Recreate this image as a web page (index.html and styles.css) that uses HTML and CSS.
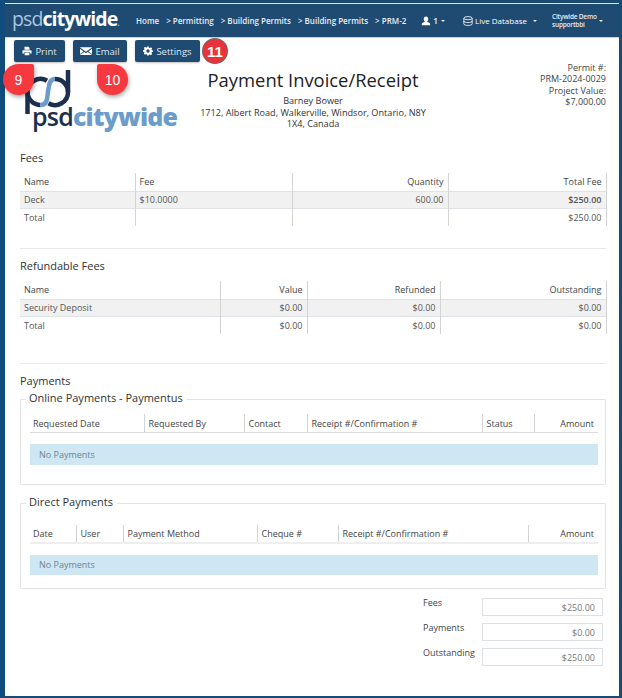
FILE: index.html
```html
<!DOCTYPE html>
<html lang="en">
<head>
<meta charset="utf-8">
<title>Payment Invoice/Receipt</title>
<link rel="stylesheet" href="styles.css">
</head>
<body>
<div class="frame">
  <nav class="nav">
    <div class="brand"><span class="brand-psd">psd</span><span class="brand-city">citywide</span><span class="brand-dot">.</span></div>
    <div class="crumbs"><span>Home</span><span>&gt; Permitting</span><span>&gt; Building Permits</span><span>&gt; Building Permits</span><span>&gt; PRM-2</span></div>
    <div class="nav-item nav-users">
      <svg class="nav-ico" viewBox="0 0 12 12"><path fill="#fff" d="M6 0.5c1.800 0 2.700 1.300 2.700 3 0 1.200-.5 2.300-1.200 2.900v.9c1.600.5 3.500 1.100 3.500 2.200V11H1V9.500c0-1.100 1.900-1.700 3.500-2.200v-.9c-.7-.6-1.200-1.700-1.200-2.900 0-1.700.9-3 2.700-3z"/></svg>
      <span>1</span><i class="caret"></i>
    </div>
    <div class="nav-item nav-db">
      <svg class="nav-ico" viewBox="0 0 12 12"><g fill="none" stroke="#fff" stroke-width="1"><ellipse cx="6" cy="2.600" rx="5" ry="1.900"/><path d="M1 2.600v6.800c0 1.100 2.200 1.900 5 1.900s5-.8 5-1.900V2.600M1 6c0 1.100 2.200 1.900 5 1.900S11 7.100 11 6"/></g></svg>
      <span>Live Database</span><i class="caret"></i>
    </div>
    <div class="nav-item nav-user">
      <div class="user-text"><span>Citywide Demo</span><span>supportbbi</span></div><i class="caret"></i>
    </div>
  </nav>

  <main class="page">
    <div class="toolbar">
      <button class="btn btn-print" type="button">
        <svg class="btn-ico" viewBox="0 0 12 12"><path fill="#fff" d="M3 .8h4.800L9 2v2.400H3zM1.500 5h9c.6 0 1 .4 1 1v3H9.500V7.500h-7V9H.5V6c0-.6.4-1 1-1zM3.200 8.200h5.600v3H3.200z"/></svg>Print
      </button>
      <button class="btn btn-email" type="button">
        <svg class="btn-ico btn-ico-wide" viewBox="0 0 14 11"><path fill="#fff" d="M.5 1h13c.3 0 .5.200.5.500L7 6.500 0 1.500C0 1.200.2 1 .5 1zM0 3l4.200 3L0 9zM14 3v6L9.800 6zM5 6.600l2 1.400 2-1.400L14 10c0 .1-.2 .3-.5 .3H.5C.2 10.300 0 10.100 0 10z"/></svg>Email
      </button>
      <button class="btn btn-settings" type="button">
        <svg class="btn-ico" viewBox="0 0 12 12"><path fill="#fff" fill-rule="evenodd" d="M5 .5h2l.3 1.500 1 .4 1.300-.8 1.400 1.400-.8 1.300.4 1L12 5.000v2l-1.400.3-.4 1 .8 1.300-1.400 1.400-1.300-.8-1 .4L7 11.500H5l-.3-1.400-1-.4-1.300.8L1 9.100l.8-1.300-.4-1L0 6.900V5l1.400-.3.4-1L1 2.400 2.400 1l1.300.8 1-.4zM6 4a2 2 0 1 0 0 4 2 2 0 0 0 0-4z"/></svg>Settings
      </button>
    </div>

    <span class="pin pin-9">9</span>
    <span class="pin pin-10">10</span>
    <span class="badge-11">11</span>

    <header class="head">
      <div class="logo">
        <svg class="logo-mark" viewBox="0 0 46 46">
          <g fill="none" stroke="#1c2f4f" stroke-width="4.500">
            <path d="M2.500 44V22A13 13 0 0 1 22 10.700"/>
            <path d="M2.500 22A13 13 0 0 0 15.500 35"/>
            <path d="M43 0V22A13 13 0 0 1 23.500 33.300"/>
            <path d="M43 22A13 13 0 0 0 30 9"/>
          </g>
          <path fill="none" stroke="#6b9ccb" stroke-width="4.500" d="M15.500 35C23 35 22 27 23 22C24 16 24 9 30 9"/>
        </svg>
        <div class="logo-word"><span class="logo-psd">psd</span><span class="logo-city">citywide</span></div>
      </div>
      <div class="head-center">
        <h1>Payment Invoice/Receipt</h1>
        <p class="addr">Barney Bower</p>
        <p class="addr">1712, Albert Road, Walkerville, Windsor, Ontario, N8Y<br>1X4, Canada</p>
      </div>
      <div class="head-right">
        <div>Permit #:</div>
        <div>PRM-2024-0029</div>
        <div class="pv">Project Value:</div>
        <div>$7,000.00</div>
      </div>
    </header>

    <section class="sec sec-fees">
      <h2>Fees</h2>
      <table class="grid">
        <colgroup><col class="f1"><col class="f2"><col class="f3"><col class="f4"></colgroup>
        <thead><tr><th>Name</th><th>Fee</th><th class="r">Quantity</th><th class="r">Total Fee</th></tr></thead>
        <tbody>
          <tr class="alt"><td>Deck</td><td>$10.0000</td><td class="r">600.00</td><td class="r b">$250.00</td></tr>
          <tr><td>Total</td><td></td><td></td><td class="r">$250.00</td></tr>
        </tbody>
      </table>
    </section>
    <hr class="rule">

    <section class="sec sec-ref">
      <h2>Refundable Fees</h2>
      <table class="grid">
        <colgroup><col class="g1"><col class="g2"><col class="g3"><col class="g4"></colgroup>
        <thead><tr><th>Name</th><th class="r">Value</th><th class="r">Refunded</th><th class="r">Outstanding</th></tr></thead>
        <tbody>
          <tr class="alt"><td>Security Deposit</td><td class="r">$0.00</td><td class="r">$0.00</td><td class="r">$0.00</td></tr>
          <tr><td>Total</td><td class="r">$0.00</td><td class="r">$0.00</td><td class="r">$0.00</td></tr>
        </tbody>
      </table>
    </section>
    <hr class="rule">

    <section class="sec sec-pay">
      <h2>Payments</h2>
      <fieldset class="box box-online">
        <legend>Online Payments - Paymentus</legend>
        <table class="plain">
          <colgroup><col class="o1"><col class="o2"><col class="o3"><col class="o4"><col class="o5"><col class="o6"></colgroup>
          <thead><tr><th>Requested Date</th><th>Requested By</th><th>Contact</th><th>Receipt #/Confirmation #</th><th>Status</th><th class="r">Amount</th></tr></thead>
        </table>
        <div class="empty empty-online">No Payments</div>
      </fieldset>
      <fieldset class="box box-direct">
        <legend>Direct Payments</legend>
        <table class="plain plain-direct">
          <colgroup><col class="d1"><col class="d2"><col class="d3"><col class="d4"><col class="d5"><col class="d6"></colgroup>
          <thead><tr><th>Date</th><th>User</th><th>Payment Method</th><th>Cheque #</th><th>Receipt #/Confirmation #</th><th class="r">Amount</th></tr></thead>
        </table>
        <div class="empty empty-direct">No Payments</div>
      </fieldset>
    </section>

    <div class="totals">
      <label class="t-label">Fees</label><div class="t-value">$250.00</div>
      <label class="t-label">Payments</label><div class="t-value">$0.00</div>
      <label class="t-label">Outstanding</label><div class="t-value">$250.00</div>
    </div>
  </main>
</div>
</body>
</html>
```
FILE: styles.css
```css
* { box-sizing: border-box; }
html, body { margin: 0; padding: 0; }
body {
  width: 622px;
  height: 698px;
  overflow: hidden;
  background: #fff;
  font-family: "Open Sans", "Liberation Sans", sans-serif;
  color: #4a4a4a;
}
.frame {
  height: 698px;
  display: flex;
  flex-direction: column;
  background: #fff;
  border-left: 5px solid #114d7c;
  border-right: 3px solid #1b4a72;
  border-bottom: 2px solid #1b4a72;
  box-shadow: inset 0 3px 0 #1b4a72;
  padding-top: 3px;
}

/* nav */
.nav {
  height: 35px;
  flex: none;
  display: flex;
  align-items: center;
  background: #1f4a72;
  border-top: 1px solid #dbe6ee;
  border-bottom: 1px solid #c6d2dc;
  color: #e6edf3;
  font-size: 8px;
  padding-left: 7px;
}
.brand { width: 124px; flex: none; font-size: 19.500px; line-height: 26px; letter-spacing: -.9px; white-space: nowrap; }
.brand-psd { color: #a9c6e0; font-weight: 500; }
.brand-city { color: #fff; font-weight: 700; }
.brand-dot { color: #a9c6e0; font-size: 10px; }
.crumbs { width: 285px; flex: none; display: flex; gap: 7px; white-space: nowrap; font-weight: 600; font-size: 8px; }
.nav-item { display: flex; align-items: center; gap: 2px; white-space: nowrap; }
.nav-users { width: 42px; font-size: 9px; font-weight: 600; }
.nav-users .caret { margin-left: 1px; }
.nav-db { width: 89px; font-size: 8px; font-weight: 400; color: #fff; }
.nav-db .caret { margin-left: 4px; }
.nav-ico { width: 10px; height: 10px; flex: none; }
.nav-user { gap: 2px; font-weight: 600; }
.user-text { display: flex; flex-direction: column; font-size: 6.500px; line-height: 8px; letter-spacing: -.2px; }
.caret { width: 0; height: 0; border: 2.500px solid transparent; border-top: 2.500px solid #e6edf3; border-bottom: 0; }

/* main */
.page { position: relative; flex: 1; padding: 2px 13px 0 15px; }
.toolbar { display: flex; height: 22px; }
.btn {
  display: flex; align-items: center; justify-content: center; gap: 3px;
  height: 22px; padding: 0;
  background: #1f4a72; color: #dfe7ee;
  border: 0; border-radius: 2px;
  font: 400 9.500px "Open Sans", sans-serif;
  box-shadow: 0 1px 2px rgba(0,0,0,.25);
}
.btn-print { width: 51px; margin-left: -6px; margin-right: 8px; }
.btn-email { width: 54px; margin-right: 8px; }
.btn-settings { width: 65px; }
.btn-ico { width: 10px; height: 10px; flex: none; }
.btn-ico-wide { width: 12px; }

/* annotation pins */
.pin, .badge-11 {
  position: absolute;
  display: flex; align-items: center; justify-content: center;
  color: #fff; background: #f5393f;
  font-family: "Liberation Sans", sans-serif;
  font-size: 14px;
}
.pin { width: 31px; height: 31px; box-shadow: 1px 2px 4px rgba(0,0,0,.35); }
.pin-9 { left: -2px; top: 26px; border-radius: 50% 2px 50% 50%; }
.pin-10 { left: 92px; top: 26px; border-radius: 2px 50% 50% 50%; }
.badge-11 {
  left: 198px; top: 1px; width: 24px; height: 24px; border-radius: 50%;
  font-weight: 700; font-size: 15px;
  box-shadow: 0 0 0 1px rgba(40,20,20,.65);
  background: #e9333b;
}

/* heading */
.head { display: flex; height: 89px; }
.logo { flex: none; width: 175px; padding: 8px 0 0 5px; }
.logo-mark { display: block; width: 46px; height: 46px; }
.logo-word { margin: -15px 0 0 7px; font-size: 25px; line-height: 30px; letter-spacing: -.8px; white-space: nowrap; }
.logo-psd { color: #1c2f4f; font-weight: 600; }
.logo-city { color: #6b9ccb; font-weight: 800; }
.head-center { flex: none; width: 236px; padding-top: 5px; text-align: center; white-space: nowrap; }
.head-center h1 { margin: 0 0 3px; font-size: 18.400px; line-height: 25px; font-weight: 500; color: #222; }
.addr { margin: 0; font-size: 9.150px; line-height: 11px; color: #333; }
.addr + .addr { margin-top: 1px; }
.head-right { flex: 1; text-align: right; font-size: 9px; line-height: 11px; color: #444; }
.pv { margin-top: 1px; }

/* sections */
.sec { margin: 0; }
.sec h2 { margin: 0; font-size: 11px; line-height: 14px; font-weight: 500; color: #333; }
.sec-fees { height: 97px; }
.sec-fees h2 { margin-bottom: 8px; }
.rule { margin: 0; width: 586px; border: 0; border-top: 1px solid #e8e8e8; }
.sec-ref { margin-top: 10px; height: 104px; }
.sec-ref h2 { margin-bottom: 8px; }
.sec-pay { margin-top: 10px; }

.grid { width: 586px; border-collapse: collapse; table-layout: fixed; font-size: 9px; color: #555; }
.grid th, .grid td { height: 17.500px; padding: 0 4px; font-weight: 400; text-align: left; border-right: 1px solid #d4d4d4; white-space: nowrap; }
.grid th { color: #444; height: 18px; }
.grid tbody tr { border-top: 1px solid #dfe3e8; }
.grid .alt td { background: #f1f1f1; }
.grid .r { text-align: right; }
.grid .b { font-weight: 600; }
.f1 { width: 115px; } .f2 { width: 157px; } .f3 { width: 156px; } .f4 { width: 158px; }
.g1 { width: 200px; } .g2 { width: 87px; } .g3 { width: 133px; } .g4 { width: 166px; }

/* fieldsets */
.box { width: 586px; height: 94px; margin: 0; padding: 0 7px 0 9px; border: 1px solid #e3e3e3; border-radius: 1px; display: block; }
.box legend { padding: 0 4px 4px 3px; margin-left: -4px; font-size: 11px; line-height: 13px; font-weight: 500; color: #333; }
.box-online { margin-top: 3px; }
.box-direct { margin-top: 10px; }
.plain { width: 568px; border-collapse: collapse; table-layout: fixed; font-size: 9px; color: #444; margin-top: 6px; }
.plain-direct { margin-top: 13px; }
.plain th { height: 18px; padding: 2px 4px 0; font-weight: 400; text-align: left; white-space: nowrap; border-right: 1px solid #d4d4d4; border-bottom: 1px solid #ddd; }
.plain th:first-child { padding-left: 3px; }
.plain th:last-child { border-right: 0; }
.plain-direct th { padding-top: 0; border-bottom: 2px solid #eee; }
.plain .r { text-align: right; }
.o1 { width: 114px; } .o2 { width: 100px; } .o3 { width: 63px; } .o4 { width: 175px; } .o5 { width: 52px; } .o6 { width: 64px; }
.d1 { width: 46px; } .d2 { width: 47px; } .d3 { width: 134px; } .d4 { width: 81px; } .d5 { width: 190px; } .d6 { width: 70px; }
.empty { height: 21px; margin-top: 11px; padding-left: 9px; background: #cfe6f3; color: #6d8594; font-size: 9px; line-height: 21px; }
.empty-direct { height: 20px; line-height: 20px; }

/* totals */
.totals { margin: 9px 0 0 403px; display: grid; grid-template-columns: 59px 121px; row-gap: 7px; font-size: 9px; }
.t-label { color: #444; line-height: 12px; margin-top: -1px; font-weight: 500; }
.t-value { height: 18px; padding-right: 7px; border: 1px solid #dcdfe3; color: #777; text-align: right; line-height: 18px; }
```
